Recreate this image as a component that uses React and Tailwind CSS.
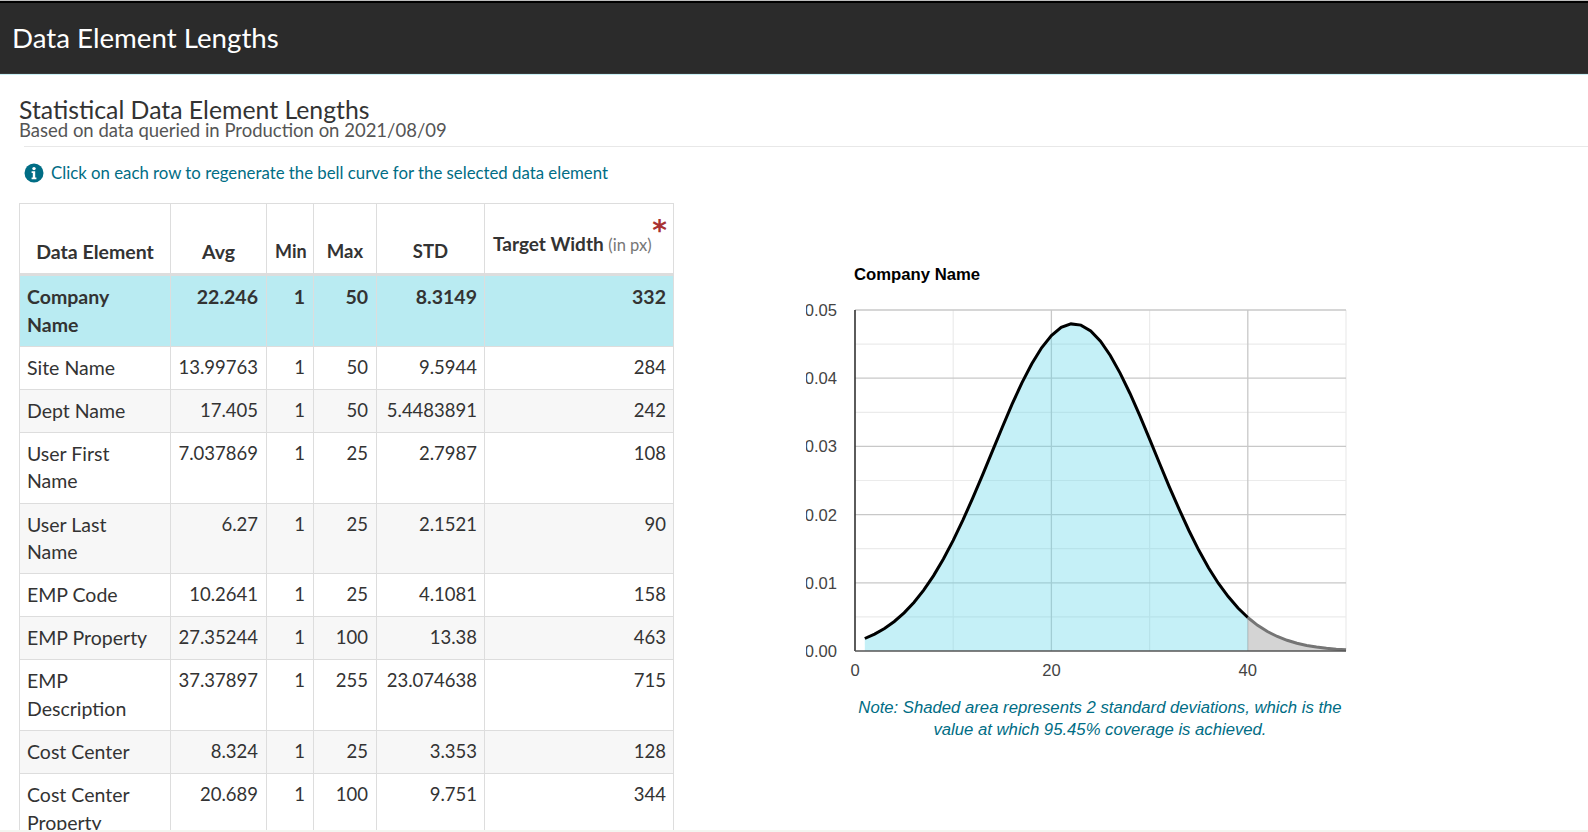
const rows = [
  ["Company Name", "22.246", "1", "50", "8.3149", "332", true],
  ["Site Name", "13.99763", "1", "50", "9.5944", "284"],
  ["Dept Name", "17.405", "1", "50", "5.4483891", "242"],
  ["User First Name", "7.037869", "1", "25", "2.7987", "108"],
  ["User Last Name", "6.27", "1", "25", "2.1521", "90"],
  ["EMP Code", "10.2641", "1", "25", "4.1081", "158"],
  ["EMP Property", "27.35244", "1", "100", "13.38", "463"],
  ["EMP Description", "37.37897", "1", "255", "23.074638", "715"],
  ["Cost Center", "8.324", "1", "25", "3.353", "128"],
  ["Cost Center Property", "20.689", "1", "100", "9.751", "344"],
];

const L = 1, R = 492, T = 10, B = 351;
const px = (x) => L + (x * (R - L)) / 50;
const py = (y) => B - (y * (B - T)) / 0.05;
const pdf = (x) => (0.39894 / 8.3149) * Math.exp(-((x - 22.246) ** 2) / (2 * 8.3149 ** 2));
const pts = (a, b) => {
  const out = [];
  for (let x = a; x <= b; x++) out.push(`${px(x).toFixed(1)},${py(pdf(x)).toFixed(1)}`);
  return out.join(" ");
};

function Chart() {
  const gridMajorH = [0.01, 0.02, 0.03, 0.04, 0.05];
  const gridMinorH = [0.005, 0.015, 0.025, 0.035, 0.045];
  return (
    <svg width="560" height="420" className="block" style={{ fontFamily: "'Liberation Sans', Arial, sans-serif" }} viewBox="-48 -40 560 420">
      {gridMinorH.map((v) => (
        <line key={v} x1={L} x2={R} y1={py(v)} y2={py(v)} stroke="#ebebeb" strokeWidth="1.2" />
      ))}
      {[10, 30, 50].map((v) => (
        <line key={v} x1={px(v)} x2={px(v)} y1={T} y2={B} stroke="#ebebeb" strokeWidth="1.2" />
      ))}
      {gridMajorH.map((v) => (
        <line key={v} x1={L} x2={R} y1={py(v)} y2={py(v)} stroke="#c8c8c8" strokeWidth="1.3" />
      ))}
      {[20, 40].map((v) => (
        <line key={v} x1={px(v)} x2={px(v)} y1={T} y2={B} stroke="#c8c8c8" strokeWidth="1.3" />
      ))}
      <polygon points={`${px(1)},${B} ${pts(1, 40)} ${px(40)},${B}`} fill="#5fd6ea" fillOpacity="0.36" />
      <polygon points={`${px(40)},${B} ${pts(40, 50)} ${px(50)},${B}`} fill="#a9a9a9" fillOpacity="0.5" />
      <polyline points={pts(1, 40)} fill="none" stroke="#000" strokeWidth="3" />
      <polyline points={pts(40, 50)} fill="none" stroke="#757575" strokeWidth="3" />
      <line x1={L} x2={L} y1={T} y2={B} stroke="#333" strokeWidth="1.6" />
      <line x1={L} x2={R} y1={B} y2={B} stroke="#555" strokeWidth="1.6" />
      <text x={0} y={-20} fontSize="16.7" fontWeight="700" fill="#000">Company Name</text>
      {["0.05", "0.04", "0.03", "0.02", "0.01", "0.00"].map((t, i) => (
        <text key={t} x={-17} y={py(0.05 - i * 0.01) + 6} textAnchor="end" fontSize="16.6" fill="#444">{t}</text>
      ))}
      {[0, 20, 40].map((v) => (
        <text key={v} x={px(v)} y={B + 25} textAnchor="middle" fontSize="16.6" fill="#444">{v}</text>
      ))}
    </svg>
  );
}

function InfoIcon() {
  return (
    <svg width="20" height="20" viewBox="0 0 20 20" className="shrink-0">
      <circle cx="10" cy="10" r="9.5" fill="#006d85" />
      <circle cx="10" cy="5.6" r="1.7" fill="#fff" />
      <path d="M7.6 8.3h3.6v6.2h1.2v1.7H7.6v-1.7h1.2V10H7.6z" fill="#fff" />
    </svg>
  );
}

export default function App() {
  const th = "border border-[#dddddd] border-b-[3px] align-bottom px-2 pb-[7px] font-bold text-center";
  const td = "border border-[#dddddd] pl-[7px] pr-2 pt-[7px] pb-[7.5px] align-top";
  const tdEnd = "border border-[#dddddd] pl-2 pr-[7px] pt-[7px] pb-[7.5px] align-top";
  return (
    <div className="h-[832px] overflow-hidden flex flex-col bg-white text-[#333333] relative" style={{ fontFamily: "Lato, 'Liberation Sans', sans-serif" }}>
      <div className="h-[1px] bg-[#bdbdbd] shrink-0" />
      <div className="h-[2px] bg-black shrink-0" />
      <header className="h-[71px] bg-[#2b2b2b] flex items-center px-3 shrink-0 border-b border-[#3a3a3a]">
        <h1 className="text-[27.7px] text-white font-normal">Data Element Lengths</h1>
      </header>
      <div className="h-[1px] bg-[#c8f0f5] shrink-0" />
      <div className="pl-[19px] pt-[22px] flex-1 min-h-0">
        <h2 className="text-[24.8px] leading-[25px] text-[#333333]">Statistical Data Element Lengths</h2>
        <p className="text-[18.5px] leading-[17px] text-[#555555] pb-[7px]">Based on data queried in Production on 2021/08/09</p>
        <div className="border-t border-[#e8e8e8] ml-[5px]" />
        <div className="flex items-center gap-[7px] ml-[5px] mt-[16px] mb-[20px] text-[#006d85] text-[16.8px] leading-[20px]">
          <InfoIcon />
          <span>Click on each row to regenerate the bell curve for the selected data element</span>
        </div>
        <div className="flex items-start">
          <table className="border-collapse table-fixed w-[654px] shrink-0 text-[19.5px] leading-[27.6px]">
            <colgroup>
              <col className="w-[151px]" />
              <col className="w-[96px]" />
              <col className="w-[47px]" />
              <col className="w-[63px]" />
              <col className="w-[108px]" />
              <col className="w-[189px]" />
            </colgroup>
            <thead>
              <tr className="h-[71px]">
                <th className={th}>Data Element</th>
                <th className={th}>Avg</th>
                <th className={th + " text-[18px]"}>Min</th>
                <th className={th + " text-[18.5px]"}>Max</th>
                <th className={th + " text-[18.5px]"}>STD</th>
                <th className="border border-[#dddddd] border-b-[3px] relative align-bottom px-2 pb-[13px] text-left font-bold whitespace-nowrap text-[19px]">
                  <span className="absolute right-[6px] top-[15px] text-[#a83232] text-[28px] leading-[24px] font-bold" style={{ fontFamily: "'DejaVu Sans', sans-serif" }}>*</span>
                  Target Width <span className="text-[16.5px] font-normal text-[#777777]">(in px)</span>
                </th>
              </tr>
            </thead>
            <tbody>
              {rows.map((r, i) => {
                const bg = r[6] ? "bg-[#b9ebf2] font-bold" : i % 2 === 0 ? "bg-[#f7f7f7]" : "bg-white";
                const num = r[6] ? "" : " text-[18.5px]";
                return (
                  <tr key={r[0]} className={bg}>
                    <td className={td}>{r[0]}</td>
                    {r.slice(1, 6).map((c, j) => (
                      <td key={j} className={(j >= 3 ? tdEnd : td) + " text-right" + num}>{c}</td>
                    ))}
                  </tr>
                );
              })}
            </tbody>
          </table>
          <div className="ml-[132px] mt-[57px] shrink-0">
            <Chart />
            <p className="italic text-[#006d85] text-[16.7px] leading-[22px] text-center w-[500px] mt-[17px] ml-[44px]" style={{ fontFamily: "'Liberation Sans', Arial, sans-serif" }}>
              Note: Shaded area represents 2 standard deviations, which is the value at which 95.45% coverage is achieved.
            </p>
          </div>
        </div>
      </div>
      <div className="absolute left-0 right-0 bottom-0 h-[2px] bg-[#f3f5f0]" />
    </div>
  );
}
